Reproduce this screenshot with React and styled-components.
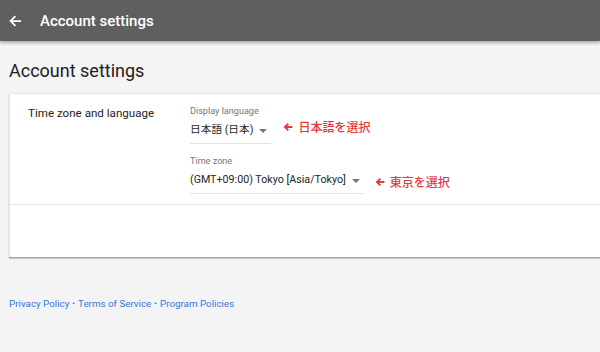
import React from "react";
import styled, { createGlobalStyle } from "styled-components";

const GlobalStyle = createGlobalStyle`
  html, body {
    margin: 0;
    padding: 0;
    background: #f4f4f4;
    font-family: Roboto, "Noto Sans CJK JP", sans-serif;
    overflow: hidden;
  }
`;

const Page = styled.div`
  width: 600px;
  height: 352px;
  display: flex;
  flex-direction: column;
`;

const TopBar = styled.header`
  height: 41px;
  flex-shrink: 0;
  background: #5f5f5f;
  box-shadow: 0 2px 3px rgba(0, 0, 0, 0.3);
  display: flex;
  align-items: center;
  padding: 0 0 0 8px;
  gap: 18px;
  position: relative;
  z-index: 1;
`;

const ArrowIcon = styled.svg`
  width: ${(p) => p.$size}px;
  height: ${(p) => p.$size}px;
  display: block;
  flex-shrink: 0;
`;

const BarTitle = styled.h1`
  margin: 0;
  color: #fff;
  font-size: 15px;
  font-weight: 500;
`;

const Content = styled.main`
  padding: 18px 0 0 9px;
  display: flex;
  flex-direction: column;
`;

const PageTitle = styled.h2`
  margin: 0 0 10px;
  font-size: 18px;
  font-weight: 400;
  color: #212121;
  line-height: 24px;
`;

const Card = styled.section`
  background: #fff;
  border-top: 1px solid #e8e8e8;
  border-left: 1px solid #e4e4e4;
  box-shadow: 0 1px 1px rgba(0, 0, 0, 0.25), 0 2px 1px rgba(0, 0, 0, 0.12);
  height: 163px;
  display: flex;
  flex-direction: column;
`;

const Section = styled.div`
  display: grid;
  grid-template-columns: 162px 1fr;
  padding: 11px 0 10px 18px;
  border-bottom: 1px solid #e6e6e6;
`;

const SectionLabel = styled.div`
  font-size: 11.6px;
  color: #1e1e1e;
  padding-top: 1px;
  line-height: 14px;
`;

const Fields = styled.div`
  display: flex;
  flex-direction: column;
  gap: 11px;
`;

const FieldRow = styled.div`
  display: flex;
  align-items: flex-end;
`;

const Field = styled.div`
  display: flex;
  flex-direction: column;
`;

const FieldLabel = styled.div`
  font-size: 9.1px;
  color: #777;
  line-height: 12px;
`;

const Select = styled.div`
  display: flex;
  align-items: center;
  gap: 6px;
  padding: 6px 4px 6px 0;
  font-size: 10.7px;
  color: #1e1e1e;
  border-bottom: 1px solid #e2e2e2;
  line-height: 14px;
`;

const Caret = styled.span`
  width: 0;
  height: 0;
  border-left: 4px solid transparent;
  border-right: 4px solid transparent;
  border-top: 4px solid #777;
  margin-top: 1px;
`;

const Note = styled.div`
  color: #e23b3b;
  font-size: 12px;
  font-weight: 500;
  display: flex;
  align-items: center;
  gap: 5px;
  margin-left: ${(p) => p.$offset}px;
  margin-bottom: ${(p) => p.$lift}px;
`;

const Footer = styled.nav`
  margin-top: 41px;
  font-size: 9.8px;
  color: #3a74dc;
  display: flex;
  align-items: center;
  gap: 3px;
`;

const Dot = styled.span`
  color: #555;
  font-size: 8px;
`;

const Arrow = ({ color, size, weight }) => (
  <ArrowIcon viewBox="0 0 16 16" $size={size}>
    <path
      d="M15 8H3M8.5 2.5L3 8l5.5 5.5"
      fill="none"
      stroke={color}
      strokeWidth={weight}
    />
  </ArrowIcon>
);

export default function App() {
  return (
    <Page>
      <GlobalStyle />
      <TopBar>
        <Arrow color="#fff" size={14} weight={2} />
        <BarTitle>Account settings</BarTitle>
      </TopBar>
      <Content>
        <PageTitle>Account settings</PageTitle>
        <Card>
          <Section>
            <SectionLabel>Time zone and language</SectionLabel>
            <Fields>
              <FieldRow>
                <Field>
                  <FieldLabel>Display language</FieldLabel>
                  <Select>
                    日本語 (日本) <Caret />
                  </Select>
                </Field>
                <Note $offset={12} $lift={9}>
                  <Arrow color="#e23b3b" size={10} weight={3} />
                  日本語を選択
                </Note>
              </FieldRow>
              <FieldRow>
                <Field>
                  <FieldLabel>Time zone</FieldLabel>
                  <Select>
                    (GMT+09:00) Tokyo [Asia/Tokyo] <Caret />
                  </Select>
                </Field>
                <Note $offset={11} $lift={4}>
                  <Arrow color="#e23b3b" size={10} weight={3} />
                  東京を選択
                </Note>
              </FieldRow>
            </Fields>
          </Section>
        </Card>
        <Footer>
          <span>Privacy Policy</span>
          <Dot>•</Dot>
          <span>Terms of Service</span>
          <Dot>•</Dot>
          <span>Program Policies</span>
        </Footer>
      </Content>
    </Page>
  );
}
